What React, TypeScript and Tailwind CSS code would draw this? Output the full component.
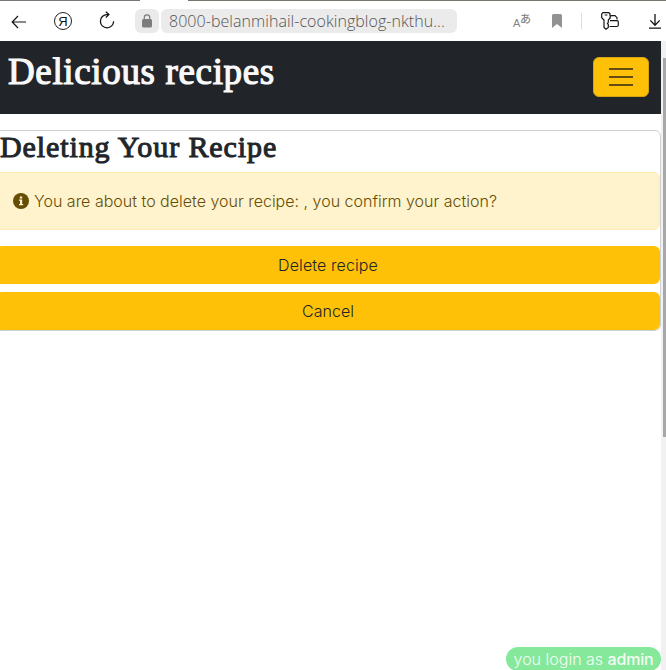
import React from "react";

function BrowserBar() {
  return (
    <header className="h-[41px] w-full shrink-0 bg-white">
      <div className="flex h-px w-full">
        <div className="w-[140px] bg-[#777]" />
        <div className="w-[48px] bg-white" />
        <div className="grow bg-[#777770]" />
      </div>
      <div className="flex h-10 items-center">
        <svg className="ml-[11px] mt-px h-4 w-4 shrink-0" viewBox="0 0 16 16" fill="none" stroke="#151515" strokeWidth="1.2">
          <path d="M15 8H1.5M7 2L1.2 8L7 14" />
        </svg>
        <div className="ml-[27px] flex h-[18px] w-[18px] shrink-0 items-center justify-center rounded-full border border-[#222] font-['Liberation_Sans',sans-serif] text-[13px] leading-none text-[#111]">
          Я
        </div>
        <svg className="-mt-[2px] ml-[27px] h-[18px] w-4 shrink-0" viewBox="0 0 16 18" fill="none" stroke="#151515" strokeWidth="1.3">
          <path d="M9.8 3.6H8a6.6 6.6 0 1 0 6.6 6.6M6.8 .7L9.9 3.6L6.8 6.5" />
        </svg>
        <div className="ml-5 flex h-6 w-6 shrink-0 items-center justify-center rounded-md bg-[#eaeaea]">
          <svg className="h-[14px] w-[10px]" viewBox="0 0 10 14">
            <path d="M2.3 6V3.5a2.7 2.7 0 0 1 5.4 0V6" fill="none" stroke="#7c7c7c" strokeWidth="1.2" />
            <rect y="5" width="10" height="8.5" rx="1.5" fill="#7c7c7c" />
          </svg>
        </div>
        <div className="ml-[2px] flex h-6 w-[296px] shrink-0 items-center overflow-hidden whitespace-nowrap rounded-md bg-[#ebebeb] pl-2 font-['Open_Sans',sans-serif] text-[16px] font-light leading-6 tracking-[0.05px] text-[#555]">
          8000-belanmihail-cookingblog-nkthu...
        </div>
        <div className="ml-[56px] flex h-5 w-[17px] shrink-0 text-[#858585]">
          <span className="mt-[6px] w-[7px] font-['Liberation_Sans',sans-serif] text-[11px] leading-3">A</span>
          <span className="-mt-px font-['Noto_Sans_CJK_JP',sans-serif] text-[11px] font-medium leading-[16px]">あ</span>
        </div>
        <svg className="-mt-px ml-[22px] h-[14px] w-[10px] shrink-0" viewBox="0 0 10 14" fill="#929292">
          <path d="M1.5 0h7Q10 0 10 1.5V14L5 10L0 14V1.5Q0 0 1.5 0Z" />
        </svg>
        <div className="ml-[19px] h-4 w-px shrink-0 bg-[#dedede]" />
        <svg className="ml-[19px] h-[18px] w-[18px] shrink-0" viewBox="0 0 18 18" fill="none" stroke="#151515" strokeWidth="1.2">
          <path d="M9 4V1.8L7.8 .7H1.9L.7 1.9V5.8L3 8V15.5L5 17.2L7.3 15.5V12.5L6.4 11.4L7.3 10.3V8L9.2 6V4M3.7 3H6.4M9 6.2V5.5Q9 3.7 10.8 3.7H14L16 5.7V7.5M9 8.6H16Q17.3 8.6 17.3 10V13Q17.3 14.5 15.8 14.5H8.5" />
        </svg>
        <svg className="ml-[30px] mt-px h-4 w-3 shrink-0" viewBox="0 0 12 16" fill="none" stroke="#151515" strokeWidth="1.3">
          <path d="M6 0V11.2M1.3 6.4L6 11.2L10.7 6.4M0 14.2H12" />
        </svg>
      </div>
    </header>
  );
}

function Alert() {
  return (
    <div className="flex h-[58px] items-center rounded-md border border-[#ffecb5] bg-[#fff3cd] pl-4 text-[#664d03]">
      <svg className="mr-[5px] h-4 w-4 shrink-0" viewBox="0 0 16 16">
        <circle cx="8" cy="8" r="8" fill="#664d03" />
        <path d="M6.8 3.5h2.4v2H6.8zM6 6.5h3.2v4.4h1v1.3H6v-1.3h1V7.8H6z" fill="#fff3cd" />
      </svg>
      <span className="whitespace-nowrap">You are about to delete your recipe: , you confirm your action?</span>
    </div>
  );
}

export default function App() {
  return (
    <div className="flex h-[670px] w-[666px] flex-col overflow-hidden bg-white font-['Inter',sans-serif] text-[16px] font-light leading-6 text-[#212529]">
      <BrowserBar />
      <div className="flex min-h-0 flex-1">
        <div className="flex w-[661px] shrink-0 flex-col overflow-hidden">
          <nav className="flex h-[73px] shrink-0 items-center justify-between bg-[#212529] pl-2 pr-3">
            <h1 className="-mt-[12px] whitespace-nowrap font-['Liberation_Serif',serif] text-[37px] font-normal leading-[44px] tracking-[0.65px] text-[#f8f9fa] [-webkit-text-stroke:1.2px_#f8f9fa]">
              Delicious recipes
            </h1>
            <button className="-mt-px flex h-10 w-14 flex-col items-center justify-center gap-[6px] rounded-md border border-[#d7a414] bg-[#ffc107]" aria-label="Menu">
              <span className="h-[2px] w-6 bg-[#644e0f]" />
              <span className="h-[2px] w-6 bg-[#644e0f]" />
              <span className="h-[2px] w-6 bg-[#644e0f]" />
            </button>
          </nav>
          <main className="-ml-[5px] mt-4 h-[201px] rounded-md border border-[#cfd0d1]">
            <h2 className="h-[41px] whitespace-nowrap pl-1 font-['Liberation_Serif',serif] text-[30px] font-normal leading-[32px] tracking-[0.9px] [-webkit-text-stroke:1px_#212529]">
              Deleting Your Recipe
            </h2>
            <Alert />
            <div className="mt-4 flex flex-col gap-2">
              <button className="h-[38px] rounded-md bg-[#ffc107] tracking-[0.1px]">Delete recipe</button>
              <button className="h-[38px] rounded-md bg-[#ffc107]">Cancel</button>
            </div>
          </main>
          <div className="-mb-px mt-auto flex h-6 w-[155px] shrink-0 items-center justify-center self-end whitespace-nowrap rounded-full bg-[#86e89b] text-white">
            <span className="opacity-90">
              you login as <span className="font-medium tracking-[-0.2px]">admin</span>
            </span>
          </div>
        </div>
        <div className="w-[5px] bg-[#f1f1f1] pl-[2px] pt-[17px]">
          <div className="h-[379px] bg-[#a8a8a8]" />
        </div>
      </div>
    </div>
  );
}
